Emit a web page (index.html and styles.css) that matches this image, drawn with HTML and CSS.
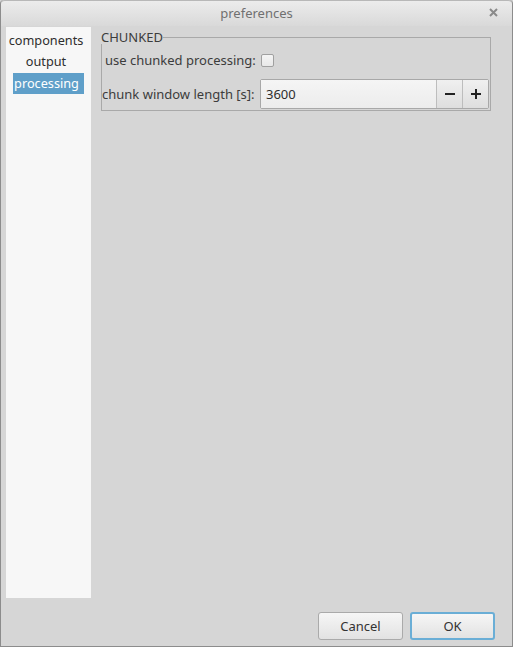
FILE: index.html
```html
<!DOCTYPE html>
<html>
<head>
<meta charset="utf-8">
<link rel="stylesheet" href="styles.css">
</head>
<body>
<div class="window">
  <div class="titlebar">
    <span class="title">preferences</span>
    <span class="close">
      <svg width="9" height="9" viewBox="0 0 9 9"><path d="M1 1L8 8M8 1L1 8" stroke="#8a8a8a" stroke-width="2"/></svg>
    </span>
  </div>
  <div class="body">
    <div class="main">
      <div class="sidebar">
        <div class="item">components</div>
        <div class="item">output</div>
        <div class="item selected">processing</div>
      </div>
      <div class="content">
        <fieldset class="group">
          <legend>CHUNKED</legend>
          <div class="row row1">
            <span class="label">use chunked processing:</span>
            <span class="checkbox"></span>
          </div>
          <div class="row row2">
            <span class="label">chunk window length [s]:</span>
            <div class="spin">
              <div class="spin-input">3600</div>
              <div class="spin-btn"><svg width="12" height="12" viewBox="0 0 12 12"><path d="M1 6H11" stroke="#222" stroke-width="2"/></svg></div>
              <div class="spin-btn"><svg width="12" height="12" viewBox="0 0 12 12"><path d="M1 6H11M6 1V11" stroke="#222" stroke-width="2"/></svg></div>
            </div>
          </div>
        </fieldset>
      </div>
    </div>
    <div class="footer">
      <button class="btn">Cancel</button>
      <button class="btn ok">OK</button>
    </div>
  </div>
</div>
</body>
</html>
```

FILE: styles.css
```css
html, body {
  margin: 0;
  padding: 0;
  background: #d6d6d6;
}
body {
  font-family: "Noto Sans", "DejaVu Sans", sans-serif;
  font-size: 13px;
  color: #3c3c3c;
}
.window {
  width: 513px;
  height: 647px;
  box-sizing: border-box;
  border: 1px solid #8c8c8c;
  border-top: none;
  border-radius: 4px 4px 0 0;
  background: #d6d6d6;
  display: flex;
  flex-direction: column;
  overflow: hidden;
}
.titlebar {
  height: 26px;
  flex: none;
  background: linear-gradient(#ececec, #d9d9d9);
  border-top: 1px solid #b8b8b8;
  border-radius: 4px 4px 0 0;
  box-sizing: border-box;
  position: relative;
  display: flex;
  align-items: center;
  justify-content: center;
}
.title {
  color: #707070;
  font-size: 13px;
  line-height: 1;
}
.close {
  position: absolute;
  right: 14px;
  top: 7px;
  line-height: 0;
}
.body {
  flex: 1;
  display: flex;
  flex-direction: column;
}
.main {
  flex: 1;
  display: flex;
  padding: 1px 0 0 5px;
}
.sidebar {
  width: 85px;
  height: 571px;
  background: #f7f7f7;
  display: flex;
  flex-direction: column;
  align-items: center;
  padding-top: 3px;
  box-sizing: border-box;
}
.item {
  height: 21px;
  line-height: 21px;
  color: #2e2e2e;
  padding: 0 4px;
  margin-right: 5px;
  font-size: 12.7px;
}
.item.selected {
  background: #5f9fc9;
  color: #ffffff;
  width: 71px;
  box-sizing: border-box;
  text-align: center;
  margin: 1px 0 0 0;
  padding: 0 4px 0 0;
}
.content {
  padding-left: 10px;
}
.group {
  margin: 0;
  width: 390px;
  height: 80px;
  box-sizing: border-box;
  border: 1px solid #a9a9a9;
  border-radius: 0;
  padding: 0;
  position: relative;
  margin-top: 4px;
}
.group legend {
  padding: 0;
  margin-left: -1px;
  color: #3c3c3c;
  line-height: 13px;
  font-size: 13px;
}
.row {
  display: flex;
  align-items: center;
}
.row1 {
  height: 22px;
  margin-top: 5px;
  padding-left: 3px;
}
.row1 .label {
  width: 156px;
}
.checkbox {
  width: 11px;
  height: 11px;
  border: 1px solid #a0a0a0;
  border-radius: 2px;
  background: linear-gradient(#f4f4f4, #e8e8e8);
}
.row2 {
  margin-top: 8px;
  height: 30px;
}
.row2 .label {
  width: 158px;
}
.spin {
  display: flex;
  height: 30px;
  border: 1px solid #a8a8a8;
  border-radius: 2px;
  box-sizing: border-box;
  width: 229px;
}
.spin-input {
  flex: 1;
  background: linear-gradient(#f5f5f5, #ececec);
  line-height: 28px;
  padding-left: 5px;
  color: #2e2e2e;
  border-right: 1px solid #bdbdbd;
}
.spin-btn {
  width: 25px;
  display: flex;
  align-items: center;
  justify-content: center;
  background: linear-gradient(#f0f0f0, #dedede);
}
.spin-btn + .spin-btn {
  border-left: 1px solid #bdbdbd;
}
.footer {
  display: flex;
  justify-content: flex-end;
  gap: 7px;
  padding: 0 17px 6px 0;
}
.btn {
  width: 85px;
  height: 28px;
  font-family: "Noto Sans", "DejaVu Sans", sans-serif;
  font-size: 13px;
  color: #333;
  background: linear-gradient(#f6f6f6, #e2e2e2);
  border: 1px solid #aaaaaa;
  border-radius: 3px;
  padding: 0;
}
.btn.ok {
  border: 2px solid #6aaed6;
}
```
